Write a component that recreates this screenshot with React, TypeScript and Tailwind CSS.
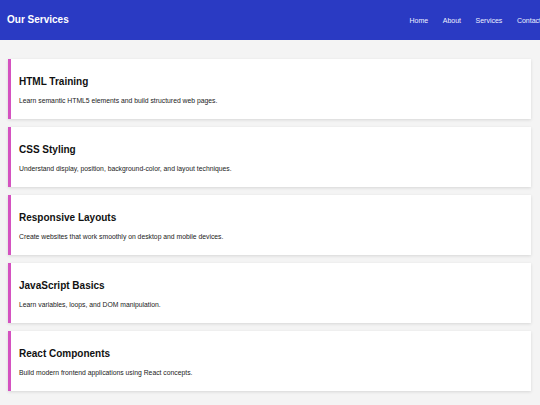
const services = [
  { title: "HTML Training", text: "Learn semantic HTML5 elements and build structured web pages." },
  { title: "CSS Styling", text: "Understand display, position, background-color, and layout techniques." },
  { title: "Responsive Layouts", text: "Create websites that work smoothly on desktop and mobile devices." },
  { title: "JavaScript Basics", text: "Learn variables, loops, and DOM manipulation." },
  { title: "React Components", text: "Build modern frontend applications using React concepts." },
];

const links = ["Home", "About", "Services", "Contact"];

export default function App() {
  return (
    <div className="min-h-[405px] bg-[#f4f4f4] font-['Liberation_Sans',Arial,sans-serif] overflow-hidden">
      <header className="h-[40px] bg-[#2a3ac3] flex items-center justify-between pl-[7px] overflow-hidden">
        <h1 className="text-[10px] font-bold text-white leading-none">Our Services</h1>
        <nav className="flex gap-[14.5px] shrink-0 mr-[-1px]">
          {links.map((l) => (
            <a key={l} href="#" className="text-[7px] text-[#eef0ff] leading-none">
              {l}
            </a>
          ))}
        </nav>
      </header>

      <main className="flex flex-col gap-[8px] pt-[19px] pl-[8px] pr-[9px]">
        {services.map((s) => (
          <section
            key={s.title}
            className="bg-white border-l-[3px] border-[#d452c0] pl-[8px] pt-[17px] pb-[14px] shadow-[0_1px_3px_rgba(0,0,0,0.12)]"
          >
            <h2 className="text-[10px] leading-[12px] font-bold text-[#111]">{s.title}</h2>
            <p className="mt-[8px] text-[6.8px] leading-[9px] text-[#222]">{s.text}</p>
          </section>
        ))}
      </main>
    </div>
  );
}
